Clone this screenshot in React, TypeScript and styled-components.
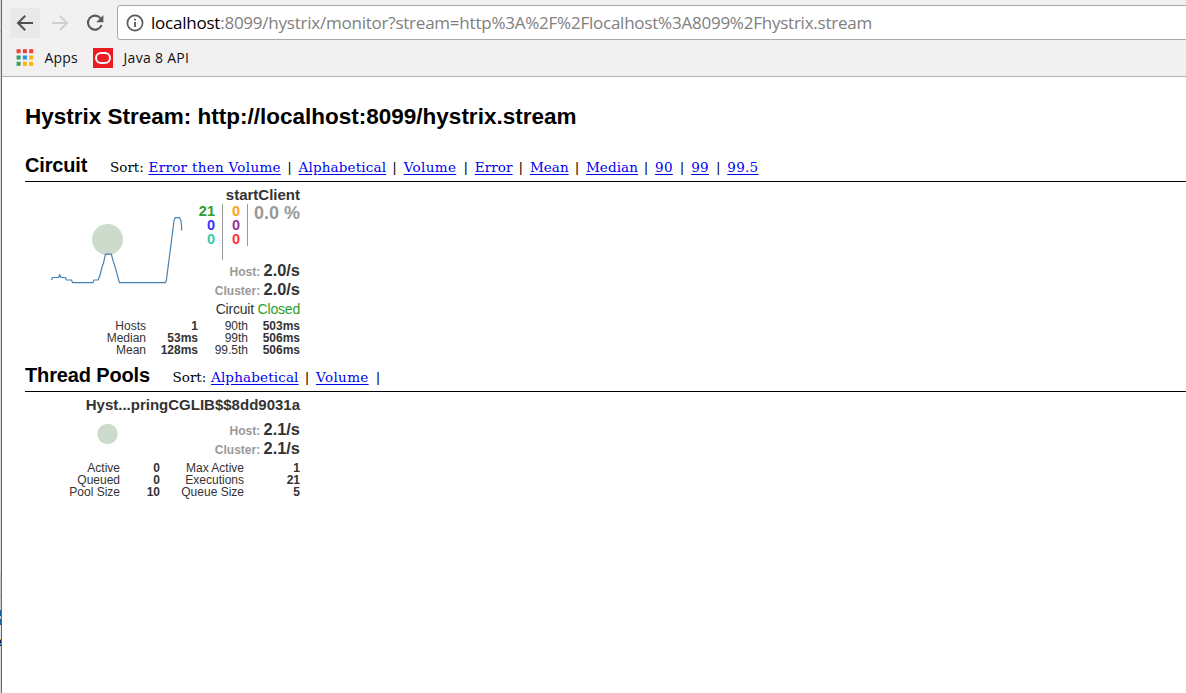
import React from "react";
import styled, { createGlobalStyle } from "styled-components";

const GlobalStyle = createGlobalStyle`
  * { box-sizing: border-box; }
  body { margin: 0; background: #fff; overflow: hidden; font-family: "Liberation Sans", Arial, sans-serif; }
`;

const Window = styled.div`
  display: flex;
  width: 1186px;
  height: 693px;
  overflow: hidden;
`;
const DesktopEdge = styled.div`
  flex: none;
  width: 2px;
  border-right: 1px solid #1f7bc2;
  background: linear-gradient(#d6d8de 0 31px, #b4b8c8 31px 32px, #d6d8de 32px 574px, #c8c8cc 574px 596px, #a9adb8 596px 597px, #c8ccd4 597px 610px, #155d9e 610px 616px, #c8ccd4 616px 619px, #155d9e 619px 625px, #e3e3e3 625px 639px, #d89432 639px 640px, #20204c 640px 643px, #4b94d8 643px 645px, #111 645px 646px, #d6d6d8 646px);
`;
const Browser = styled.div`
  flex: 1;
  min-width: 0;
`;
const Chrome = styled.header`
  height: 77px;
  padding-top: 5px;
  background: #f1f1f1;
  border-bottom: 1px solid #b3b3b3;
`;
const Toolbar = styled.div`
  display: flex;
  height: 35px;
  align-items: center;
  padding-left: 8px;
`;
const NavButton = styled.span<{ $w: number; $active?: boolean }>`
  display: flex;
  flex: none;
  align-items: center;
  justify-content: center;
  width: ${(p) => p.$w}px;
  height: 30px;
  background: ${(p) => (p.$active ? "#e9e9e9" : "transparent")};
`;
const AddressBar = styled.div`
  display: flex;
  flex: none;
  align-items: center;
  width: 1090px;
  height: 35px;
  margin-left: 7px;
  padding-left: 8px;
  border: 1px solid #a9a9a9;
  border-radius: 3px;
  background: #fff;
`;
const Url = styled.span`
  margin-left: 7px;
  font: 17px/30px "Open Sans", sans-serif;
  letter-spacing: -0.23px;
  white-space: nowrap;
  color: #808080;
  b { font-weight: 400; color: #000; }
`;
const Bookmarks = styled.div`
  display: flex;
  align-items: center;
  height: 35px;
  padding-left: 14px;
`;
const Bookmark = styled.span<{ $w: number; $gap: number; $spacing: number }>`
  display: flex;
  align-items: center;
  gap: ${(p) => p.$gap}px;
  width: ${(p) => p.$w}px;
  font: 14px/20px "Open Sans", sans-serif;
  letter-spacing: ${(p) => p.$spacing}px;
  white-space: nowrap;
  color: #111;
`;
const Page = styled.main`
  padding-left: 23px;
`;
const Title = styled.h1`
  margin: 0;
  padding-top: 27px;
  height: 74px;
  font-size: 22.5px;
  line-height: 26px;
  white-space: nowrap;
`;
const SectionHeader = styled.div<{ $h: number; $gap: number; $top?: number }>`
  display: flex;
  align-items: baseline;
  gap: ${(p) => p.$gap}px;
  height: ${(p) => p.$h}px;
  padding-top: ${(p) => p.$top ?? 0}px;
  border-bottom: 1px solid #000;
  white-space: nowrap;
`;
const SectionTitle = styled.h2<{ $w: number }>`
  width: ${(p) => p.$w}px;
  margin: 0;
  font-size: 20px;
  letter-spacing: -0.15px;
  line-height: 28px;
`;
const SortLinks = styled.div`
  display: flex;
  font: 13.5px/20px "DejaVu Serif", serif;
`;
const SortLink = styled.a<{ $w: number; $spacing: number }>`
  width: ${(p) => p.$w}px;
  letter-spacing: ${(p) => p.$spacing}px;
  color: #0000ee;
  text-decoration: underline;
  text-underline-offset: 2px;
`;
const SortLabel = styled.span`
  width: 38.5px;
`;
const Divider = styled.span`
  width: 18.1px;
  text-align: center;
`;
const Monitor = styled.section`
  width: 275px;
  color: #333;
`;
const MonitorName = styled.div`
  height: 22px;
  padding-top: 4px;
  font-size: 15px;
  font-weight: 700;
  line-height: 18px;
  text-align: right;
`;
const MonitorBody = styled.div<{ $h: number }>`
  display: flex;
  height: ${(p) => p.$h}px;
`;
const ChartArea = styled.div`
  flex: none;
  width: 165px;
`;
const Stats = styled.div<{ $top?: number }>`
  width: 110px;
  padding-top: ${(p) => p.$top ?? 0}px;
`;
const Counters = styled.div`
  display: flex;
  height: 57px;
  align-items: flex-start;
`;
const CounterColumn = styled.div<{ $w: number; $h: number }>`
  width: ${(p) => p.$w}px;
  height: ${(p) => p.$h}px;
  padding-right: 7px;
  border-right: 1px solid #999;
`;
const Counter = styled.div<{ $color: string }>`
  font-size: 14.5px;
  font-weight: 700;
  line-height: 14px;
  text-align: right;
  color: ${(p) => p.$color};
`;
const ErrorRate = styled.div`
  flex: 1;
  font-size: 18px;
  font-weight: 700;
  line-height: 19px;
  text-align: right;
  white-space: nowrap;
  color: #999;
`;
const Rate = styled.div`
  height: 19px;
  font-size: 12px;
  font-weight: 700;
  line-height: 19px;
  text-align: right;
  color: #999;
  b { font-size: 16.4px; color: #333; }
`;
const Status = styled.div`
  padding-top: 1px;
  font-size: 14px;
  letter-spacing: -0.2px;
  line-height: 19px;
  text-align: right;
  white-space: nowrap;
  span { color: #2ca02c; }
`;
const Metrics = styled.div<{ $cols: string }>`
  display: grid;
  grid-template-columns: ${(p) => p.$cols};
  font-size: 12px;
  line-height: 12px;
  text-align: right;
  white-space: nowrap;
`;

const CHROME_GRID = ["#ef4136", "#ef4136", "#ef4136", "#34a060", "#2196f3", "#fbb40a", "#34a060", "#fbb40a", "#fbb40a"];

function BackIcon({ color }: { color: string }) {
  return (
    <svg width="18" height="18" viewBox="0 0 18 18" fill="none" stroke={color} strokeWidth="2">
      <path d="M17 9H2.5M9.2 1.8 2 9l7.2 7.2" />
    </svg>
  );
}
function ForwardIcon({ color }: { color: string }) {
  return (
    <svg width="18" height="18" viewBox="0 0 18 18" fill="none" stroke={color} strokeWidth="2">
      <path d="M1 9h14.5M8.8 1.8 16 9l-7.2 7.2" />
    </svg>
  );
}
function ReloadIcon() {
  return (
    <svg width="18" height="18" viewBox="0 0 18 18">
      <path d="M14.4 4.2A7 7 0 1 0 15.6 11" fill="none" stroke="#5a5a5a" strokeWidth="2.1" />
      <path d="M17.4 1v7.2h-7.2z" fill="#5a5a5a" />
    </svg>
  );
}
function InfoIcon() {
  return (
    <svg width="18" height="18" viewBox="0 0 18 18">
      <circle cx="9" cy="9" r="7.6" fill="none" stroke="#5a5a5a" strokeWidth="1.7" />
      <path d="M9 8v5M9 4.8v1.8" stroke="#5a5a5a" strokeWidth="1.8" />
    </svg>
  );
}

type Sort = { label: string; width: number; spacing: number };

const CIRCUIT_SORTS: Sort[] = [
  { label: "Error then Volume", width: 132, spacing: 0.3 },
  { label: "Alphabetical", width: 87, spacing: 0.15 },
  { label: "Volume", width: 53, spacing: 0.35 },
  { label: "Error", width: 37, spacing: 0.1 },
  { label: "Mean", width: 38, spacing: 0.05 },
  { label: "Median", width: 51, spacing: 0.08 },
  { label: "90", width: 18, spacing: 0.3 },
  { label: "99", width: 18, spacing: 0.3 },
  { label: "99.5", width: 31, spacing: 0.3 },
];
const POOL_SORTS: Sort[] = CIRCUIT_SORTS.slice(1, 3);

function Sorts({ items, trailing }: { items: Sort[]; trailing?: boolean }) {
  return (
    <SortLinks>
      <SortLabel>Sort:</SortLabel>
      {items.map(({ label, width, spacing }, i) => (
        <React.Fragment key={label}>
          <SortLink $w={width} $spacing={spacing}>{label}</SortLink>
          {(i < items.length - 1 || trailing) && <Divider>|</Divider>}
        </React.Fragment>
      ))}
    </SortLinks>
  );
}
function MetricGrid({ cols, values }: { cols: string; values: string[] }) {
  return (
    <Metrics $cols={cols}>
      {values.map((v, i) => (i % 2 ? <b key={i}>{v}</b> : <span key={i}>{v}</span>))}
    </Metrics>
  );
}

export default function App() {
  return (
    <Window>
      <GlobalStyle />
      <DesktopEdge />
      <Browser>
        <Chrome>
          <Toolbar>
            <NavButton $w={30} $active><BackIcon color="#505050" /></NavButton>
            <NavButton $w={40}><ForwardIcon color="#d0d0d0" /></NavButton>
            <NavButton $w={30}><ReloadIcon /></NavButton>
            <AddressBar>
              <InfoIcon />
              <Url><b>localhost</b>:8099/hystrix/monitor?stream=http%3A%2F%2Flocalhost%3A8099%2Fhystrix.stream</Url>
            </AddressBar>
          </Toolbar>
          <Bookmarks>
            <Bookmark $w={77} $gap={10.5} $spacing={0.15}>
              <svg width="18" height="18" viewBox="0 0 18 18">
                {CHROME_GRID.map((c, i) => (
                  <rect key={i} x={0.6 + (i % 3) * 6.3} y={0.2 + Math.floor(i / 3) * 6.3} width="4" height="4" fill={c} />
                ))}
              </svg>
              Apps
            </Bookmark>
            <Bookmark $w={120} $gap={10.5} $spacing={0.3}>
              <svg width="20" height="20" viewBox="0 0 20 20">
                <rect width="20" height="20" fill="#ed1c24" />
                <rect x="3" y="5" width="14" height="10" rx="5" fill="none" stroke="#fff" strokeWidth="2" />
              </svg>
              Java 8 API
            </Bookmark>
          </Bookmarks>
        </Chrome>
        <Page>
          <Title>Hystrix Stream: http://localhost:8099/hystrix.stream</Title>
          <SectionHeader $h={31} $gap={22}>
            <SectionTitle $w={63}>Circuit</SectionTitle>
            <Sorts items={CIRCUIT_SORTS} />
          </SectionHeader>
          <Monitor>
            <MonitorName>startClient</MonitorName>
            <MonitorBody $h={116}>
              <ChartArea>
                <svg width="165" height="90" viewBox="25 204 165 90">
                  <circle cx="107.5" cy="239.5" r="15.5" fill="#ccdbcc" />
                  <path
                    d="M51.5 280l1-2.5h6l1.2-2.5 1.2 2.5h4.5l1 2.5h5l1.2 2.6H93l1-2.6h4.2l2.3-6.5 1.5-6.5 1.5-4 2-8.8h5.8l1.8 6.5 1.5 4.5 4.8 17.4h46l1-2.5 7.8-60.5 1.2-2h4l1.5 3 .7 6v4"
                    fill="none" stroke="#4682b4" strokeWidth="1.2"
                  />
                </svg>
              </ChartArea>
              <Stats>
                <Counters>
                  <CounterColumn $w={33} $h={56}>
                    <Counter $color="#2ca02c">21</Counter>
                    <Counter $color="#3333ff">0</Counter>
                    <Counter $color="#33ccaa">0</Counter>
                  </CounterColumn>
                  <CounterColumn $w={25} $h={42}>
                    <Counter $color="#ffa020">0</Counter>
                    <Counter $color="#993399">0</Counter>
                    <Counter $color="#ff3333">0</Counter>
                  </CounterColumn>
                  <ErrorRate>0.0 %</ErrorRate>
                </Counters>
                <Rate>Host: <b>2.0/s</b></Rate>
                <Rate>Cluster: <b>2.0/s</b></Rate>
                <Status>Circuit <span>Closed</span></Status>
              </Stats>
            </MonitorBody>
            <MetricGrid
              cols="121px 52px 50px 52px"
              values={["Hosts", "1", "90th", "503ms", "Median", "53ms", "99th", "506ms", "Mean", "128ms", "99.5th", "506ms"]}
            />
          </Monitor>
          <SectionHeader $h={36} $gap={22} $top={5}>
            <SectionTitle $w={125.5}>Thread Pools</SectionTitle>
            <Sorts items={POOL_SORTS} trailing />
          </SectionHeader>
          <Monitor>
            <MonitorName>Hyst...pringCGLIB$$8dd9031a</MonitorName>
            <MonitorBody $h={48}>
              <ChartArea>
                <svg width="165" height="44" viewBox="25 414 165 44">
                  <circle cx="107.5" cy="434" r="10.2" fill="#ccdbcc" />
                </svg>
              </ChartArea>
              <Stats $top={6}>
                <Rate>Host: <b>2.1/s</b></Rate>
                <Rate>Cluster: <b>2.1/s</b></Rate>
              </Stats>
            </MonitorBody>
            <MetricGrid
              cols="95px 40px 84px 56px"
              values={["Active", "0", "Max Active", "1", "Queued", "0", "Executions", "21", "Pool Size", "10", "Queue Size", "5"]}
            />
          </Monitor>
        </Page>
      </Browser>
    </Window>
  );
}
